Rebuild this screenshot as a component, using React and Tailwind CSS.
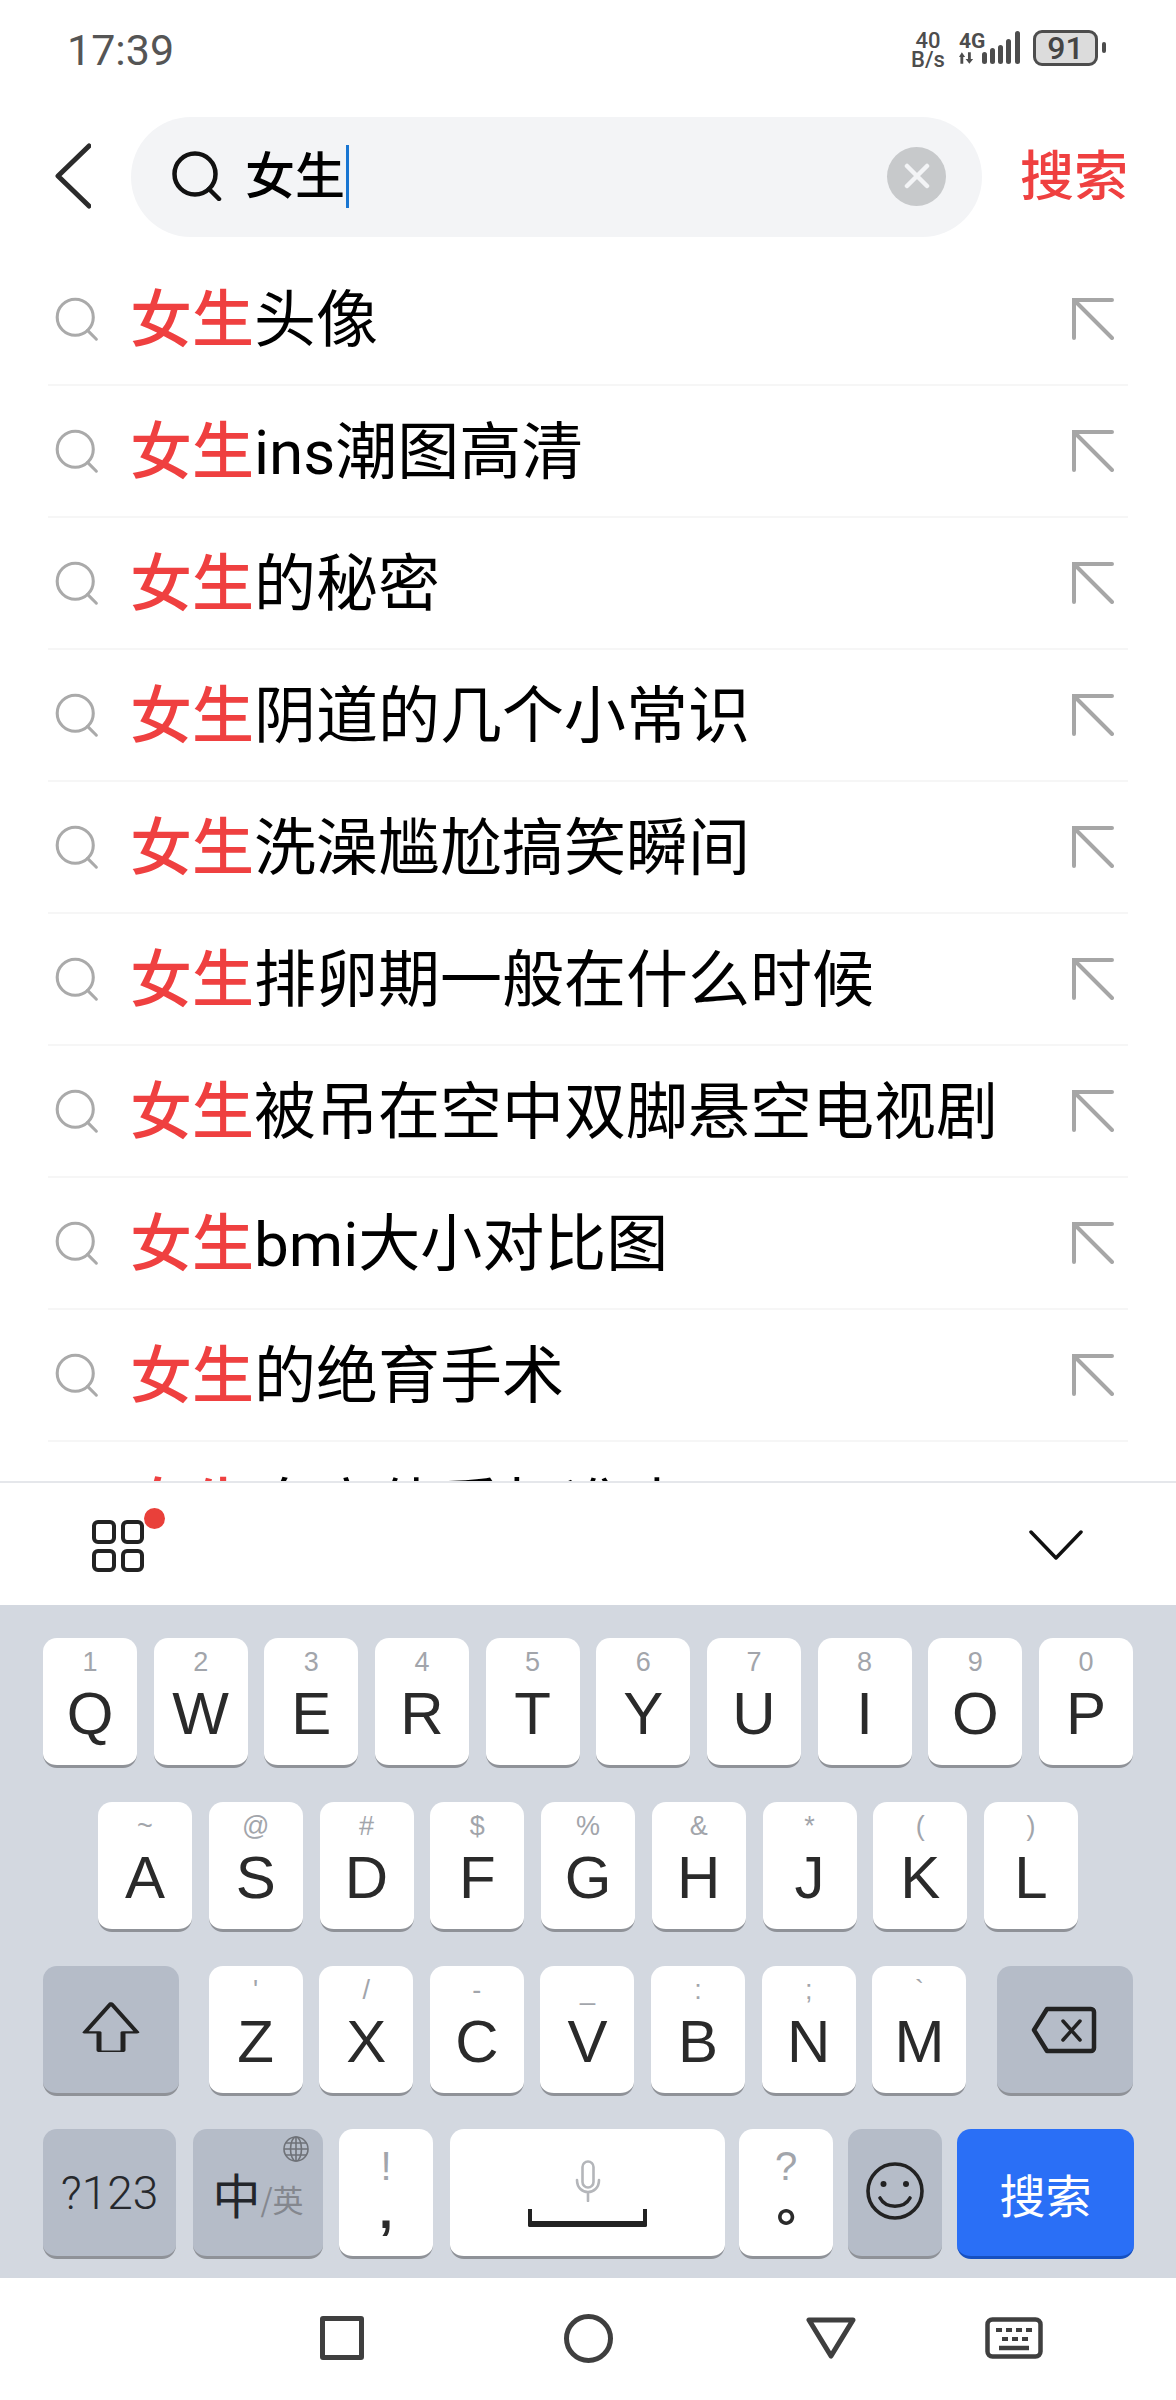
const suggestions = [
  "头像",
  "ins潮图高清",
  "的秘密",
  "阴道的几个小常识",
  "洗澡尴尬搞笑瞬间",
  "排卵期一般在什么时候",
  "被吊在空中双脚悬空电视剧",
  "bmi大小对比图",
  "的绝育手术",
  "身高体重标准表",
];

const row1 = [["1", "Q"], ["2", "W"], ["3", "E"], ["4", "R"], ["5", "T"], ["6", "Y"], ["7", "U"], ["8", "I"], ["9", "O"], ["0", "P"]];
const row2 = [["~", "A"], ["@", "S"], ["#", "D"], ["$", "F"], ["%", "G"], ["&", "H"], ["*", "J"], ["(", "K"], [")", "L"]];
const row3 = [["'", "Z"], ["/", "X"], ["-", "C"], ["_", "V"], [":", "B"], [";", "N"], ["`", "M"]];

function SearchIcon({ className, stroke, width }) {
  return (
    <svg viewBox="0 0 50 50" className={className} fill="none" stroke={stroke} strokeWidth={width} strokeLinecap="round">
      <circle cx="23" cy="23" r="20.5" />
      <path d="M37 38l10 10" />
    </svg>
  );
}

function Key({ sub, label }) {
  return (
    <div className="w-[94px] h-[130px] flex flex-col items-center bg-white rounded-[14px] border-b-[3px] border-[#8f9298]">
      <span className="h-[44px] pt-[8px] text-[27px] leading-[32px] text-[#a2a5ab] font-['Liberation_Sans',sans-serif]">{sub}</span>
      <span className="text-[60px] leading-[64px] text-[#2a2a2a] font-['Liberation_Sans',sans-serif]">{label}</span>
    </div>
  );
}

function StatusBar() {
  return (
    <div className="h-[117px] shrink-0 flex items-start justify-between pl-[67px] pr-[70px] pt-[25px] text-[#555]">
      <span className="text-[43px] leading-[50px] font-['Roboto',sans-serif]">17:39</span>
      <div className="flex items-start pt-[6px] font-['Roboto',sans-serif]">
        <div className="flex flex-col items-center w-[36px] font-medium text-[22px] leading-[19px] text-[#4d4d4d]">
          <span>40</span>
          <span>B/s</span>
        </div>
        <div className="flex flex-col ml-[13px] w-[26px]">
          <span className="font-bold text-[21px] leading-[20px] text-[#4d4d4d]">4G</span>
          <svg viewBox="0 0 18 12" className="w-[17px] h-[12px] mt-[1px]" fill="#4d4d4d">
            <path d="M3 0l3.5 5H4.500v7h-3V5H0zM9.500 0h3v7h2.500L11 12 7 7h2.500z" />
          </svg>
        </div>
        <svg viewBox="0 0 38 34" className="w-[38px] h-[34px] -ml-[3px]" fill="#4d4d4d">
          <rect x="0" y="21" width="5" height="12" rx="2.5" />
          <rect x="8" y="17" width="5" height="16" rx="2.5" />
          <rect x="16" y="14" width="5" height="19" rx="2.5" />
          <rect x="24" y="8" width="5" height="25" rx="2.5" />
          <rect x="33" y="0" width="5" height="33" rx="2.5" />
        </svg>
        <div className="ml-[13px] w-[65px] h-[36px] -mt-[1px] flex items-center justify-center rounded-[9px] border-[3px] border-[#4d4d4d] bg-[#dcdcdc] text-[32px] leading-none font-medium text-[#444]">
          91
        </div>
        <div className="w-[4px] h-[11px] ml-[4px] mt-[11px] rounded-[2px] bg-[#4d4d4d]" />
      </div>
    </div>
  );
}

function SearchHeader() {
  return (
    <div className="h-[120px] shrink-0 flex items-center pl-[55px]">
      <svg viewBox="0 0 36 66" className="w-[36px] h-[66px] shrink-0 -mt-[2px]" fill="none" stroke="#2b2b2b" strokeWidth="5" strokeLinecap="round" strokeLinejoin="round">
        <path d="M34 3L3 33l31 30" />
      </svg>
      <div className="ml-[40px] w-[851px] h-[120px] flex items-center pl-[41px] pr-[36px] rounded-full bg-[#f3f4f6]">
        <svg viewBox="0 0 50 50" className="w-[50px] h-[50px] shrink-0 -mt-[3px]" fill="none" stroke="#111" strokeWidth="4.5" strokeLinecap="round">
          <circle cx="23" cy="23" r="20.5" />
          <path d="M37 38l10 10" />
        </svg>
        <span className="ml-[23px] -mt-[10px] text-[50px] leading-[60px] font-medium text-black">女生</span>
        <span className="ml-[1px] w-[3px] h-[63px] -mt-[2px] bg-[#1976d2]" />
        <div className="ml-auto w-[59px] h-[59px] -mt-[2px] flex items-center justify-center rounded-full bg-[#c7c9cb]">
          <svg viewBox="0 0 26 26" className="w-[26px] h-[26px]" fill="none" stroke="#f3f4f6" strokeWidth="4.5" strokeLinecap="round">
            <path d="M3 3l20 20M23 3L3 23" />
          </svg>
        </div>
      </div>
      <span className="ml-[38px] -mt-[8px] text-[54px] leading-[60px] font-medium text-[#ef4040]">搜索</span>
    </div>
  );
}

function SuggestionList() {
  return (
    <div className="flex-1 min-h-0 overflow-hidden pt-[17px] px-[48px]">
      {suggestions.map((text) => (
        <div key={text} className="h-[132px] flex items-center border-b-2 border-[#f6f6f6]">
          <SearchIcon className="ml-[7px] w-[44px] h-[48px] shrink-0" stroke="#aaaaaa" width="3.5" />
          <p className="ml-[31px] -mt-[2px] text-[62px] leading-[80px] whitespace-nowrap text-black font-['Roboto','Noto_Sans_CJK_SC',sans-serif]">
            <span className="text-[#ef4040] font-medium font-['Noto_Sans_CJK_SC',sans-serif]">女生</span>
            {text}
          </p>
          <svg viewBox="0 0 42 42" className="ml-auto mr-[14px] w-[42px] h-[42px] shrink-0" fill="none" stroke="#a6a6a6" strokeWidth="4" strokeLinecap="round">
            <path d="M40 2H2v38M3 3l37 37" />
          </svg>
        </div>
      ))}
    </div>
  );
}

function Toolbar() {
  return (
    <div className="h-[124px] shrink-0 flex items-center justify-between pl-[92px] pr-[93px] bg-white border-t-2 border-[#e5e7eb]">
      <div className="relative w-[52px] h-[52px] mt-[4px] grid grid-cols-2 gap-[5px]">
        <div className="rounded-[6px] border-4 border-[#222]" />
        <div className="rounded-[6px] border-4 border-[#222]" />
        <div className="rounded-[6px] border-4 border-[#222]" />
        <div className="rounded-[6px] border-4 border-[#222]" />
        <div className="absolute -top-[12px] left-[52px] w-[21px] h-[21px] rounded-full bg-[#e9403a]" />
      </div>
      <svg viewBox="0 0 54 30" className="w-[54px] h-[30px] mt-[2px]" fill="none" stroke="#111" strokeWidth="3.5" strokeLinecap="round" strokeLinejoin="round">
        <path d="M2 2l25 26L52 2" />
      </svg>
    </div>
  );
}

function FuncKey({ className, children }) {
  return (
    <div className={`h-[130px] flex items-center justify-center rounded-[14px] border-b-[3px] ${className}`}>
      {children}
    </div>
  );
}

function PunctKey({ top, bottom, bottomClass }) {
  return (
    <div className="w-[94px] h-[130px] flex flex-col items-center bg-white rounded-[14px] border-b-[3px] border-[#8f9298]">
      <span className="h-[62px] pt-[12px] text-[40px] leading-[50px] text-[#a2a5ab] font-['Liberation_Sans',sans-serif]">{top}</span>
      <span className={bottomClass}>{bottom}</span>
    </div>
  );
}

function Keyboard() {
  return (
    <div className="h-[673px] shrink-0 flex flex-col bg-[#d3d8e0] pt-[33px] font-['Liberation_Sans',sans-serif]">
      <div className="flex justify-between px-[43px]">
        {row1.map(([sub, label]) => <Key key={label} sub={sub} label={label} />)}
      </div>
      <div className="flex justify-between pl-[98px] pr-[98px] mt-[34px]">
        {row2.map(([sub, label]) => <Key key={label} sub={sub} label={label} />)}
      </div>
      <div className="flex justify-between pl-[43px] pr-[43px] mt-[34px]">
        <FuncKey className="w-[136px] bg-[#b5bcc8] border-[#8f9298]">
          <svg viewBox="0 0 58 112" className="w-[58px] h-[50px] -mt-[6px]" preserveAspectRatio="none" fill="none" stroke="#222" strokeWidth="5" strokeLinejoin="round">
            <path d="M29 3L3 68h14v40a3 3 0 003 3h18a3 3 0 003-3V68h14z" />
          </svg>
        </FuncKey>
        <div className="flex justify-between w-[758px] -ml-[1px]">
          {row3.map(([sub, label]) => <Key key={label} sub={sub} label={label} />)}
        </div>
        <FuncKey className="w-[136px] bg-[#b5bcc8] border-[#8f9298]">
          <svg viewBox="0 0 66 48" className="w-[66px] h-[48px] mr-[2px]" fill="none" stroke="#222" strokeWidth="4.5" strokeLinejoin="round" strokeLinecap="round">
            <path d="M16 3h44a3 3 0 013 3v36a3 3 0 01-3 3H16L3 24z" />
            <path d="M32 15l17 19M49 15L32 34" strokeWidth="3.5" />
          </svg>
        </FuncKey>
      </div>
      <div className="flex pl-[43px] mt-[33px]">
        <FuncKey className="w-[133px] bg-[#b5bcc8] border-[#8f9298]">
          <span className="text-[46px] leading-none font-light text-[#26282c] font-['Roboto',sans-serif]">?123</span>
        </FuncKey>
        <div className="relative ml-[17px]">
          <FuncKey className="w-[130px] bg-[#b5bcc8] border-[#8f9298]">
            <span className="flex items-end font-['Noto_Sans_CJK_SC',sans-serif]">
              <span className="text-[48px] leading-[60px] text-[#23262b]">中</span>
              <span className="text-[31px] leading-[48px] text-[#84878e]">/英</span>
            </span>
          </FuncKey>
          <svg viewBox="0 0 26 26" className="absolute top-[7px] right-[14px] w-[26px] h-[26px]" fill="none" stroke="#6f7278" strokeWidth="1.6">
            <circle cx="13" cy="13" r="12" />
            <ellipse cx="13" cy="13" rx="5.5" ry="12" />
            <path d="M13 1v24M1 13h24M3 7h20M3 19h20" />
          </svg>
        </div>
        <div className="ml-[16px]">
          <PunctKey top="!" bottom="," bottomClass="text-[50px] leading-[40px] font-bold text-[#2b2b2b]" />
        </div>
        <div className="ml-[17px] w-[275px] h-[130px] flex flex-col items-center bg-white rounded-[14px] border-b-[3px] border-[#8f9298]">
          <svg viewBox="0 0 26 42" className="w-[26px] h-[42px] mt-[31px]" fill="none" stroke="#b4b6ba" strokeWidth="2.6" strokeLinecap="round">
            <rect x="7.5" y="1.5" width="11" height="26" rx="5.5" />
            <path d="M2 20c0 16 22 16 22 0M13 32v9" />
          </svg>
          <div className="w-[119px] h-[18px] mt-[7px] border-x-[4px] border-b-[6px] border-[#222] rounded-b-[2px]" />
        </div>
        <div className="ml-[14px]">
          <PunctKey top="?" bottom="。" bottomClass="text-[50px] leading-[50px] -mt-[2px] font-bold text-[#2b2b2b] font-['Noto_Sans_CJK_TC',sans-serif]" />
        </div>
        <div className="ml-[15px]">
          <FuncKey className="w-[94px] bg-[#b5bcc8] border-[#8f9298]">
            <svg viewBox="0 0 58 58" className="w-[58px] h-[58px] -mt-[4px]" fill="none" stroke="#222" strokeWidth="3.6" strokeLinecap="round">
              <circle cx="29" cy="29" r="27" />
              <circle cx="17.5" cy="22" r="3" fill="#222" stroke="none" />
              <circle cx="40" cy="22" r="3" fill="#222" stroke="none" />
              <path d="M14 36c6 11 24 11 30 0" />
            </svg>
          </FuncKey>
        </div>
        <div className="ml-[15px]">
          <FuncKey className="w-[177px] bg-[#2a6ff6] border-[#1650c0]">
            <span className="text-[46px] leading-none text-white font-['Noto_Sans_CJK_SC',sans-serif]">搜索</span>
          </FuncKey>
        </div>
      </div>
    </div>
  );
}

function NavBar() {
  return (
    <div className="h-[122px] shrink-0 flex items-center pl-[320px] pb-[2px] bg-white">
      <div className="w-[44px] h-[44px] rounded-[3px] border-[5px] border-[#3f3f3f]" />
      <div className="ml-[200px] w-[49px] h-[49px] rounded-full border-[5px] border-[#3f3f3f]" />
      <svg viewBox="0 0 50 42" className="ml-[193px] w-[50px] h-[42px]" fill="none" stroke="#3f3f3f" strokeWidth="5" strokeLinejoin="round">
        <path d="M3 3h44L25 39z" />
      </svg>
      <svg viewBox="0 0 58 42" className="ml-[129px] w-[58px] h-[42px]" fill="none" stroke="#3f3f3f" strokeWidth="4.5">
        <rect x="2.5" y="2.5" width="53" height="37" rx="5" />
        <path d="M11 13h6M21 13h6M31 13h6M41 13h6M17 22h6M27 22h6M37 22h6" strokeWidth="4" />
        <path d="M14 31h30" />
      </svg>
    </div>
  );
}

export default function App() {
  return (
    <div className="w-[1176px] h-[2400px] flex flex-col overflow-hidden bg-white font-['Noto_Sans_CJK_SC',sans-serif]">
      <StatusBar />
      <SearchHeader />
      <SuggestionList />
      <Toolbar />
      <Keyboard />
      <NavBar />
    </div>
  );
}
